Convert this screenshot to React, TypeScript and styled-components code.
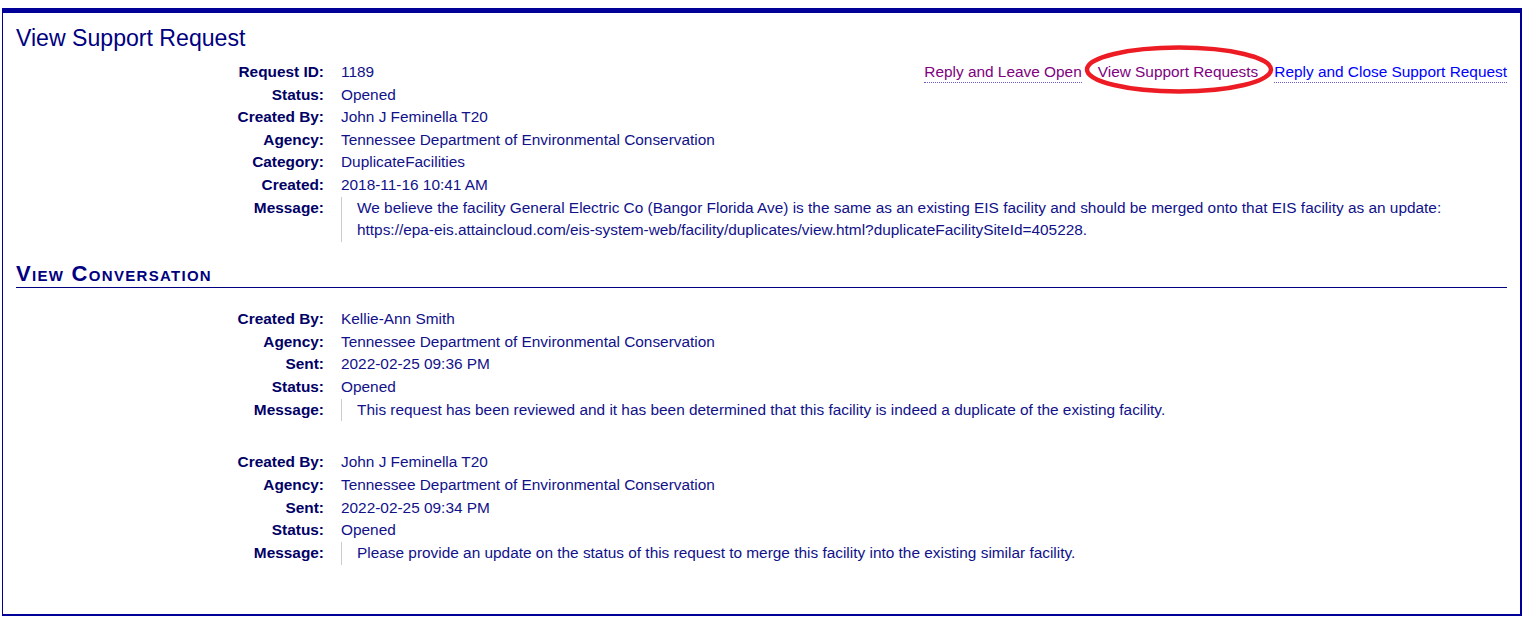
import styled, { createGlobalStyle } from "styled-components";

const GlobalStyle = createGlobalStyle`
  html, body {
    margin: 0;
    padding: 0;
    background: #ffffff;
  }
  body {
    font-family: "Liberation Sans", Arial, sans-serif;
    font-size: 15.4px;
    color: #000080;
  }
`;

const Page = styled.div`
  padding: 8px 0 0 2px;
`;

const Panel = styled.div`
  box-sizing: border-box;
  width: 1520px;
  border: 2px solid #000099;
  border-top: 5px solid #000099;
  border-left-width: 1.5px;
  padding: 0 13px 49px 13px;
`;

const Title = styled.h1`
  margin: 12px 0 10px 0;
  font-size: 23.1px;
  font-weight: normal;
  line-height: 26px;
  color: #000080;
`;

const Details = styled.div`
  display: grid;
  grid-template-columns: 308px 1fr auto;
  column-gap: 17px;
  grid-auto-rows: minmax(22.6px, auto);
  & + & {
    margin-top: 30px;
  }
`;

const Label = styled.div`
  grid-column: 1;
  text-align: right;
  font-weight: bold;
  color: #000066;
  line-height: 22.6px;
  white-space: nowrap;
`;

const Value = styled.div<{ $span?: boolean }>`
  grid-column: ${({ $span }) => ($span ? "2 / 4" : "2")};
  line-height: 22.6px;
  color: #11118a;
`;

const Message = styled.div`
  grid-column: 2 / 4;
  padding-left: 15px;
  border-left: 1px solid #cccccc;
  line-height: 22.8px;
  color: #11118a;
`;

const Links = styled.div`
  grid-column: 3;
  position: relative;
  display: flex;
  gap: 16px;
  line-height: 20px;
  align-self: start;
  padding-top: 1px;
`;

const Link = styled.a<{ $visited?: boolean; $plain?: boolean }>`
  color: ${({ $visited }) => ($visited ? "#800080" : "#0000ff")};
  text-decoration: none;
  border-bottom: 1px dotted
    ${({ $plain }) => ($plain ? "transparent" : "#6a5acd")};
  cursor: pointer;
  white-space: nowrap;
`;

const Circle = styled.svg`
  position: absolute;
  left: 160px;
  top: -16px;
  width: 190px;
  height: 50px;
  pointer-events: none;
  overflow: visible;
`;

const SectionHeading = styled.h2`
  margin: 21px 0 20px;
  padding-bottom: 3px;
  border-bottom: 1.5px solid #000080;
  font-size: 22px;
  letter-spacing: 1.3px;
  line-height: 21px;
  font-weight: bold;
  font-variant: small-caps;
  color: #000080;
`;

interface Field {
  label: string;
  value: string;
}

interface Entry {
  fields: Field[];
  message: string;
}

const request: Field[] = [
  { label: "Status:", value: "Opened" },
  { label: "Created By:", value: "John J Feminella T20" },
  { label: "Agency:", value: "Tennessee Department of Environmental Conservation" },
  { label: "Category:", value: "DuplicateFacilities" },
  { label: "Created:", value: "2018-11-16 10:41 AM" },
];

const conversation: Entry[] = [
  {
    fields: [
      { label: "Created By:", value: "Kellie-Ann Smith" },
      { label: "Agency:", value: "Tennessee Department of Environmental Conservation" },
      { label: "Sent:", value: "2022-02-25 09:36 PM" },
      { label: "Status:", value: "Opened" },
    ],
    message:
      "This request has been reviewed and it has been determined that this facility is indeed a duplicate of the existing facility.",
  },
  {
    fields: [
      { label: "Created By:", value: "John J Feminella T20" },
      { label: "Agency:", value: "Tennessee Department of Environmental Conservation" },
      { label: "Sent:", value: "2022-02-25 09:34 PM" },
      { label: "Status:", value: "Opened" },
    ],
    message:
      "Please provide an update on the status of this request to merge this facility into the existing similar facility.",
  },
];

const App = () => {
  return (
    <Page>
      <GlobalStyle />
      <Panel>
        <Title>View Support Request</Title>
        <Details>
          <Label>Request ID:</Label>
          <Value>1189</Value>
          <Links>
            <Link $visited>Reply and Leave Open</Link>
            <Link $visited $plain>
              View Support Requests
            </Link>
            <Link>Reply and Close Support Request</Link>
            <Circle viewBox="0 0 190 50">
              <ellipse
                cx="95"
                cy="24.5"
                rx="92"
                ry="22"
                fill="none"
                stroke="#ed1c24"
                strokeWidth="4.5"
              />
            </Circle>
          </Links>
          {request.map((f) => (
            <>
              <Label key={f.label}>{f.label}</Label>
              <Value $span>{f.value}</Value>
            </>
          ))}
          <Label>Message:</Label>
          <Message>
            We believe the facility General Electric Co (Bangor Florida Ave) is
            the same as an existing EIS facility and should be merged onto that
            EIS facility as an update:
            <br />
            https://epa-eis.attaincloud.com/eis-system-web/facility/duplicates/view.html?duplicateFacilitySiteId=405228.
          </Message>
        </Details>

        <SectionHeading>View Conversation</SectionHeading>

        {conversation.map((entry, idx) => (
          <Details key={idx}>
            {entry.fields.map((f) => (
              <>
                <Label>{f.label}</Label>
                <Value $span>{f.value}</Value>
              </>
            ))}
            <Label>Message:</Label>
            <Message>{entry.message}</Message>
          </Details>
        ))}
      </Panel>
    </Page>
  );
};

export default App;
